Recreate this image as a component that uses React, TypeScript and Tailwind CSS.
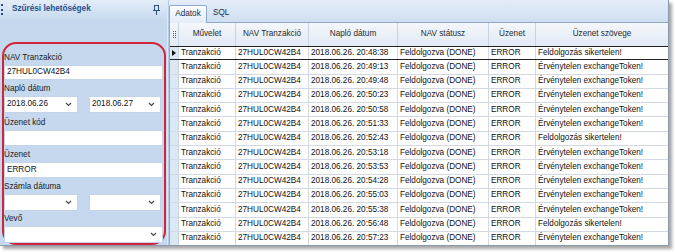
import React from "react";

const rows = [
  { t: "20:48:38", ok: false },
  { t: "20:49:13", ok: true },
  { t: "20:49:48", ok: true },
  { t: "20:50:23", ok: true },
  { t: "20:50:58", ok: true },
  { t: "20:51:33", ok: true },
  { t: "20:52:43", ok: false },
  { t: "20:53:18", ok: true },
  { t: "20:53:53", ok: true },
  { t: "20:54:28", ok: true },
  { t: "20:55:03", ok: true },
  { t: "20:55:38", ok: true },
  { t: "20:56:48", ok: false },
  { t: "20:57:23", ok: true },
];

const Chevron = () => (
  <svg width="7" height="5" viewBox="0 0 7 5" className="shrink-0">
    <path d="M1 1 L3.5 3.5 L6 1" fill="none" stroke="#4a4a4a" strokeWidth="1.2" />
  </svg>
);

const Label = ({ text, mt }: { text: string; mt: string }) => (
  <div className={`h-[12px] flex items-center text-[#1b1b1b] ${mt}`}>{text}</div>
);

const Input = ({ value, h }: { value?: string; h: string }) => (
  <div className={`mt-[1px] bg-white border border-[#c4d4e8] flex items-center px-[2px] mr-[1px] ${h}`}>
    {value}
  </div>
);

const Select = ({ value, w }: { value?: string; w: string }) => (
  <div className={`h-[17px] bg-white border border-[#c4d4e8] flex items-center justify-between px-[2px] pr-[5px] ${w}`}>
    <span>{value}</span>
    <Chevron />
  </div>
);

const PinIcon = () => (
  <svg width="7" height="10" viewBox="0 0 7 10">
    <rect x="1.5" y="0.5" width="4" height="5" fill="#d9e6f5" stroke="#2b4f80" />
    <line x1="0" y1="5.5" x2="7" y2="5.5" stroke="#2b4f80" />
    <line x1="3.5" y1="6" x2="3.5" y2="10" stroke="#2b4f80" />
  </svg>
);

const cell = "h-full flex items-center border-r border-[#d3d9e2] px-[2px] whitespace-nowrap overflow-hidden";

export default function App() {
  return (
    <div
      className="w-[675px] h-[252px] bg-white text-[8.2px] text-[#111]"
      style={{ fontFamily: '"Liberation Sans", Arial, sans-serif' }}
    >
      <div className="w-[669px] h-[246px] flex bg-[#c6d8ee] border-r border-b border-[#8a9bb0] shadow-[3px_3px_3px_rgba(0,0,0,0.35)]">
        {/* filter panel */}
        <div className="w-[167px] flex flex-col">
          <div className="h-[19px] flex items-center bg-gradient-to-b from-[#e3edf8] to-[#c9dbef]">
            <div className="w-[3px] h-[11px] ml-[1px] border-l-2 border-dotted border-[#2a4a78]" />
            <div className="ml-[8px] font-bold text-[#1d4f8e] flex-1">Szűrési lehetőségek</div>
            <div className="mr-[7px] flex items-center">
              <PinIcon />
            </div>
          </div>
          <div className="mt-[23px] ml-[2px] mr-[1px] h-[203px] border-2 border-[#d3253a] rounded-[14px] pt-[8px]">
            <Label text="NAV Tranzakció" mt="mt-0" />
            <Input value="27HUL0CW42B4" h="h-[15px]" />
            <Label text="Napló dátum" mt="mt-[3px]" />
            <div className="flex justify-between pr-[3px] mt-[1px]">
              <Select value="2018.06.26" w="w-[74px]" />
              <Select value="2018.06.27" w="w-[72px]" />
            </div>
            <Label text="Üzenet kód" mt="mt-[4px]" />
            <Input h="h-[16px]" />
            <Label text="Üzenet" mt="mt-[3px]" />
            <Input value="ERROR" h="h-[16px]" />
            <Label text="Számla dátuma" mt="mt-[3px]" />
            <div className="flex justify-between pr-[3px] mt-[1px]">
              <Select w="w-[74px]" />
              <Select w="w-[72px]" />
            </div>
            <Label text="Vevő" mt="mt-[2px]" />
            <div className="mt-[1px]">
              <Select w="w-[159px]" />
            </div>
          </div>
        </div>

        {/* splitter */}
        <div className="w-[2px] bg-[#b7cbe4] border-l border-[#dfe9f5]" />

        {/* data panel */}
        <div className="flex-1 flex flex-col min-w-0">
          <div className="h-[23px] flex items-end bg-gradient-to-b from-[#e4edf8] to-[#cfdff1] border-b border-[#8ea9cd]">
            <div className="h-[18px] w-[38px] flex items-center justify-center border border-b-0 border-[#8ea9cd] rounded-t-[2px] bg-gradient-to-b from-[#fbfdff] to-[#e3ecf7] text-[#1b2a3c] -mb-[1px]">
              Adatok
            </div>
            <div className="h-[17px] ml-[6px] flex items-center text-[#1b2a3c]">SQL</div>
          </div>
          <div className="flex-1 bg-white border-l border-[#8ea9cd] overflow-hidden">
            {/* header */}
            <div className="h-[24px] flex border-b border-[#b7c6d9] bg-gradient-to-b from-[#f4f7fb] to-[#e2eaf5] text-[#2a2a2a]">
              <div className="w-[9px] h-full flex items-center justify-center border-r border-[#c9d4e2]">
                <div className="w-[3px] h-[7px] border-x border-y-0 border-dotted border-[#555]" />
              </div>
              <div className="w-[57px] h-full flex items-center justify-center border-r border-[#c9d4e2]">Művelet</div>
              <div className="w-[73px] h-full flex items-center justify-center border-r border-[#c9d4e2]">NAV Tranzakció</div>
              <div className="w-[89px] h-full flex items-center justify-center border-r border-[#c9d4e2]">Napló dátum</div>
              <div className="w-[91px] h-full flex items-center justify-center border-r border-[#c9d4e2]">NAV státusz</div>
              <div className="w-[47px] h-full flex items-center justify-center border-r border-[#c9d4e2]">Üzenet</div>
              <div className="flex-1 h-full flex items-center justify-center">Üzenet szövege</div>
            </div>
            {/* rows */}
            {rows.map((r, i) => (
              <div
                key={r.t}
                className={`h-[14.3px] flex border-b ${i === 0 ? "border-[#222]" : "border-[#d3d9e2]"} ${i === 0 ? "-mt-[1px] border-t border-t-[#222]" : ""}`}
              >
                <div className="w-[9px] h-full flex items-center justify-center bg-[#dce7f4] border-r border-[#c9d4e2]">
                  {i === 0 && (
                    <svg width="4" height="6" viewBox="0 0 4 6">
                      <path d="M0 0 L4 3 L0 6 Z" fill="#111" />
                    </svg>
                  )}
                </div>
                <div className={`w-[57px] ${cell}`}>Tranzakció</div>
                <div className={`w-[73px] ${cell}`}>27HUL0CW42B4</div>
                <div className={`w-[89px] ${cell}`}>2018.06.26. {r.t}</div>
                <div className={`w-[91px] ${cell}`}>Feldolgozva (DONE)</div>
                <div className={`w-[47px] ${cell}`}>ERROR</div>
                <div className="flex-1 h-full flex items-center px-[2px] whitespace-nowrap">
                  {r.ok ? "Érvénytelen exchangeToken!" : "Feldolgozás sikertelen!"}
                </div>
              </div>
            ))}
          </div>
        </div>
      </div>
    </div>
  );
}
